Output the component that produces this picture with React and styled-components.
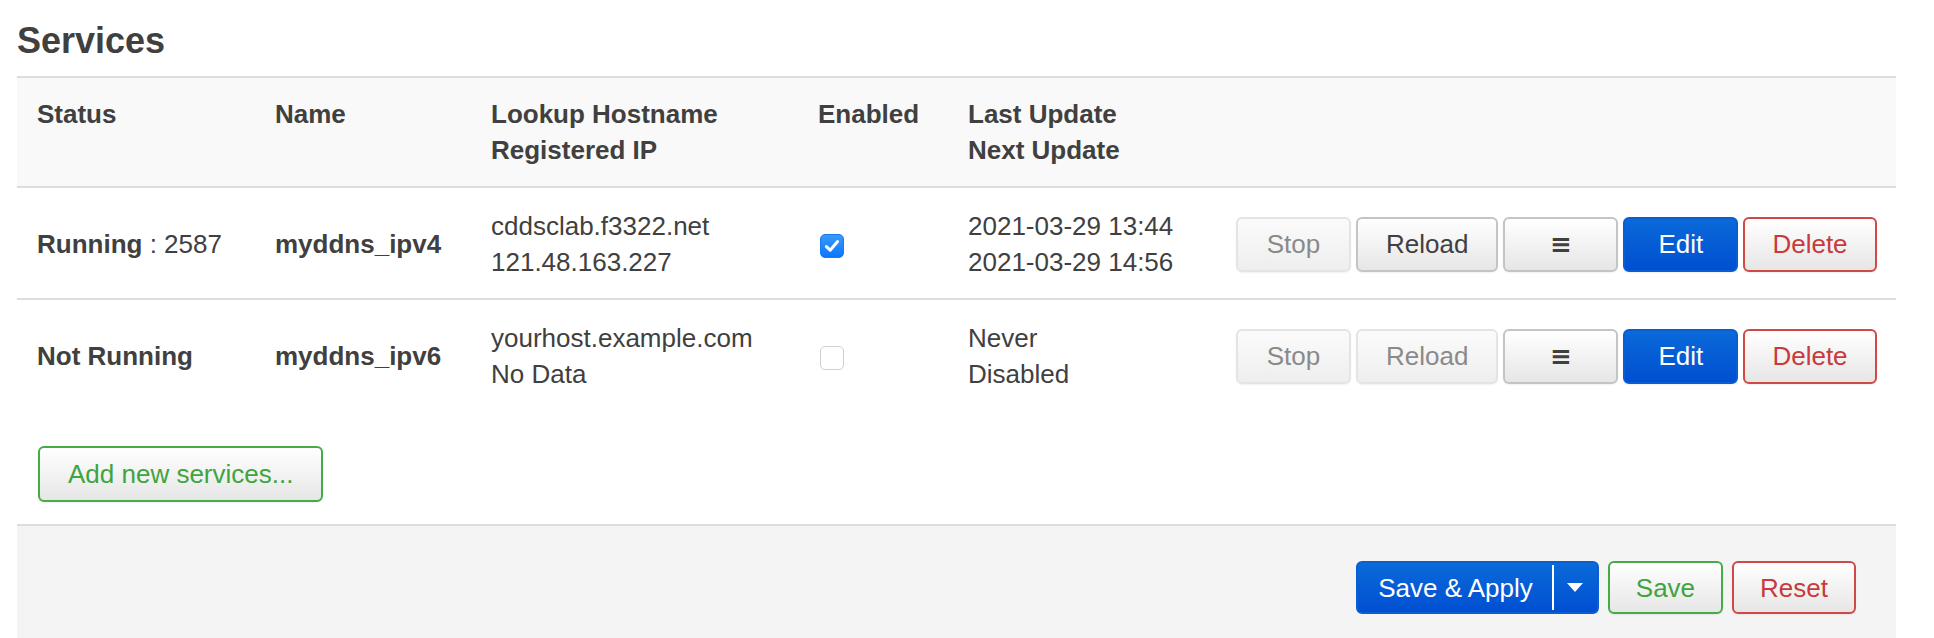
import React from 'react';
import styled, { createGlobalStyle, css } from 'styled-components';

const GlobalStyle = createGlobalStyle`
  html, body {
    margin: 0;
    background: #fff;
  }
`;

const Page = styled.div`
  padding: 0 38px 0 17px;
  font-family: "Liberation Sans", Arial, sans-serif;
  font-size: 26px;
  line-height: 36px;
  color: #404040;
`;

const Heading = styled.h3`
  margin: 0 0 14px;
  padding-top: 20px;
  font-size: 36px;
  line-height: 42px;
  font-weight: bold;
  color: #404040;
`;

const Row = styled.div`
  display: grid;
  grid-template-columns: 238px 216px 327px 150px 268px 1fr;
  align-items: center;
  padding: 20px 0 18px;
  border-bottom: ${({ $last }) => ($last ? 'none' : '2px solid #ddd')};
`;

const HeadRow = styled(Row)`
  align-items: start;
  padding: 18px 0;
  background: #f9f9f9;
  border-top: 2px solid #ddd;
  font-weight: bold;
`;

const Cell = styled.div`
  padding: 0 20px;
  white-space: nowrap;
`;

const Actions = styled(Cell)`
  display: flex;
  justify-content: flex-end;
  gap: 5px;
  padding-right: 24px;
`;

const variants = {
  default: css`
    border-color: #c4c4c4;
    color: #404040;
  `,
  disabled: css`
    border-color: #e4e4e4;
    color: #8a8a8a;
    background: linear-gradient(#fbfbfb, #eeeeee);
  `,
  primary: css`
    border-color: #0a5ed2;
    color: #fff;
    background: linear-gradient(#0a6ad9, #004fd2);
  `,
  negative: css`
    border-color: #d04848;
    color: #c93a3a;
  `,
  positive: css`
    border-color: #46aa46;
    color: #3ea53e;
  `,
};

const Button = styled.button`
  box-sizing: border-box;
  height: ${({ $h }) => $h || 55}px;
  min-width: 115px;
  padding: 0 ${({ $pad }) => $pad || 28}px;
  border: 2px solid;
  border-radius: 6px;
  background: linear-gradient(#ffffff, #e6e6e6);
  box-shadow: 0 1px 2px rgba(0, 0, 0, 0.06);
  font-family: inherit;
  font-size: 26px;
  line-height: 1;
  cursor: pointer;
  ${({ $variant }) => variants[$variant || 'default']}
`;

const MenuGlyph = styled.span`
  font-family: "DejaVu Sans", sans-serif;
  font-size: 26px;
  font-weight: bold;
`;

const Check = styled.span`
  display: inline-flex;
  align-items: center;
  justify-content: center;
  margin-left: 2px;
  width: 24px;
  height: 24px;
  box-sizing: border-box;
  border-radius: 5px;
  vertical-align: middle;
  ${({ $checked }) =>
    $checked
      ? css`
          background: linear-gradient(#3a98fc, #0a78fb);
          border: 1px solid #1a7cf0;
        `
      : css`
          background: #fff;
          border: 1px solid #cfcfcf;
        `}
`;

const AddBar = styled.div`
  padding: 36px 0 22px 21px;
`;

const Footer = styled.div`
  display: flex;
  justify-content: flex-end;
  gap: 9px;
  min-height: 114px;
  box-sizing: border-box;
  padding: 35px 40px 0;
  background: #f4f4f4;
  border-top: 2px solid #ddd;
`;

const Split = styled.div`
  display: flex;
  height: 53px;
  border: 2px solid #0a5ed2;
  border-radius: 6px;
  box-sizing: border-box;
  background: linear-gradient(#0a6ad9, #004fd2);
  color: #fff;
  overflow: hidden;
`;

const SplitMain = styled.span`
  display: flex;
  align-items: center;
  padding: 0 19px 0 20px;
  font-size: 26px;
`;

const SplitToggle = styled.span`
  display: flex;
  align-items: center;
  justify-content: center;
  width: 43px;
  border-left: 2px solid #fff;
  margin: 2px 0;
`;

const CheckBox = ({ checked }) => (
  <Check $checked={checked}>
    {checked && (
      <svg width="18" height="18" viewBox="0 0 18 18">
        <path d="M3.4 9.6 7.2 13.2 14.6 4.6" fill="none" stroke="#fff" strokeWidth="3" strokeLinecap="round" strokeLinejoin="round" />
      </svg>
    )}
  </Check>
);

const services = [
  {
    status: 'Running',
    pid: '2587',
    name: 'myddns_ipv4',
    host: 'cddsclab.f3322.net',
    ip: '121.48.163.227',
    enabled: true,
    last: '2021-03-29 13:44',
    next: '2021-03-29 14:56',
  },
  {
    status: 'Not Running',
    name: 'myddns_ipv6',
    host: 'yourhost.example.com',
    ip: 'No Data',
    enabled: false,
    last: 'Never',
    next: 'Disabled',
  },
];

const ServiceRow = ({ s, last }) => (
  <Row $last={last}>
    <Cell>
      <b>{s.status}</b>
      {s.pid && ` : ${s.pid}`}
    </Cell>
    <Cell>
      <b>{s.name}</b>
    </Cell>
    <Cell>
      {s.host}
      <br />
      {s.ip}
    </Cell>
    <Cell>
      <CheckBox checked={s.enabled} />
    </Cell>
    <Cell>
      {s.last}
      <br />
      {s.next}
    </Cell>
    <Actions>
      <Button $variant="disabled">Stop</Button>
      <Button $variant={s.pid ? 'default' : 'disabled'}>Reload</Button>
      <Button>
        <MenuGlyph>≡</MenuGlyph>
      </Button>
      <Button $variant="primary">Edit</Button>
      <Button $variant="negative" $pad={27}>Delete</Button>
    </Actions>
  </Row>
);

export default function App() {
  return (
    <Page>
      <GlobalStyle />
      <Heading>Services</Heading>
      <HeadRow>
        <Cell>Status</Cell>
        <Cell>Name</Cell>
        <Cell>
          Lookup Hostname
          <br />
          Registered IP
        </Cell>
        <Cell>Enabled</Cell>
        <Cell>
          Last Update
          <br />
          Next Update
        </Cell>
        <Cell />
      </HeadRow>
      {services.map((s, i) => (
        <ServiceRow key={s.name} s={s} last={i === services.length - 1} />
      ))}
      <AddBar>
        <Button $variant="positive" $h={56}>
          Add new services...
        </Button>
      </AddBar>
      <Footer>
        <Split>
          <SplitMain>Save &amp; Apply</SplitMain>
          <SplitToggle>
            <svg width="16" height="9" viewBox="0 0 16 9">
              <path d="M0 0h16L8 9z" fill="#fff" />
            </svg>
          </SplitToggle>
        </Split>
        <Button $variant="positive" $h={53} $pad={26}>
          Save
        </Button>
        <Button $variant="negative" $h={53} $pad={26}>
          Reset
        </Button>
      </Footer>
    </Page>
  );
}
